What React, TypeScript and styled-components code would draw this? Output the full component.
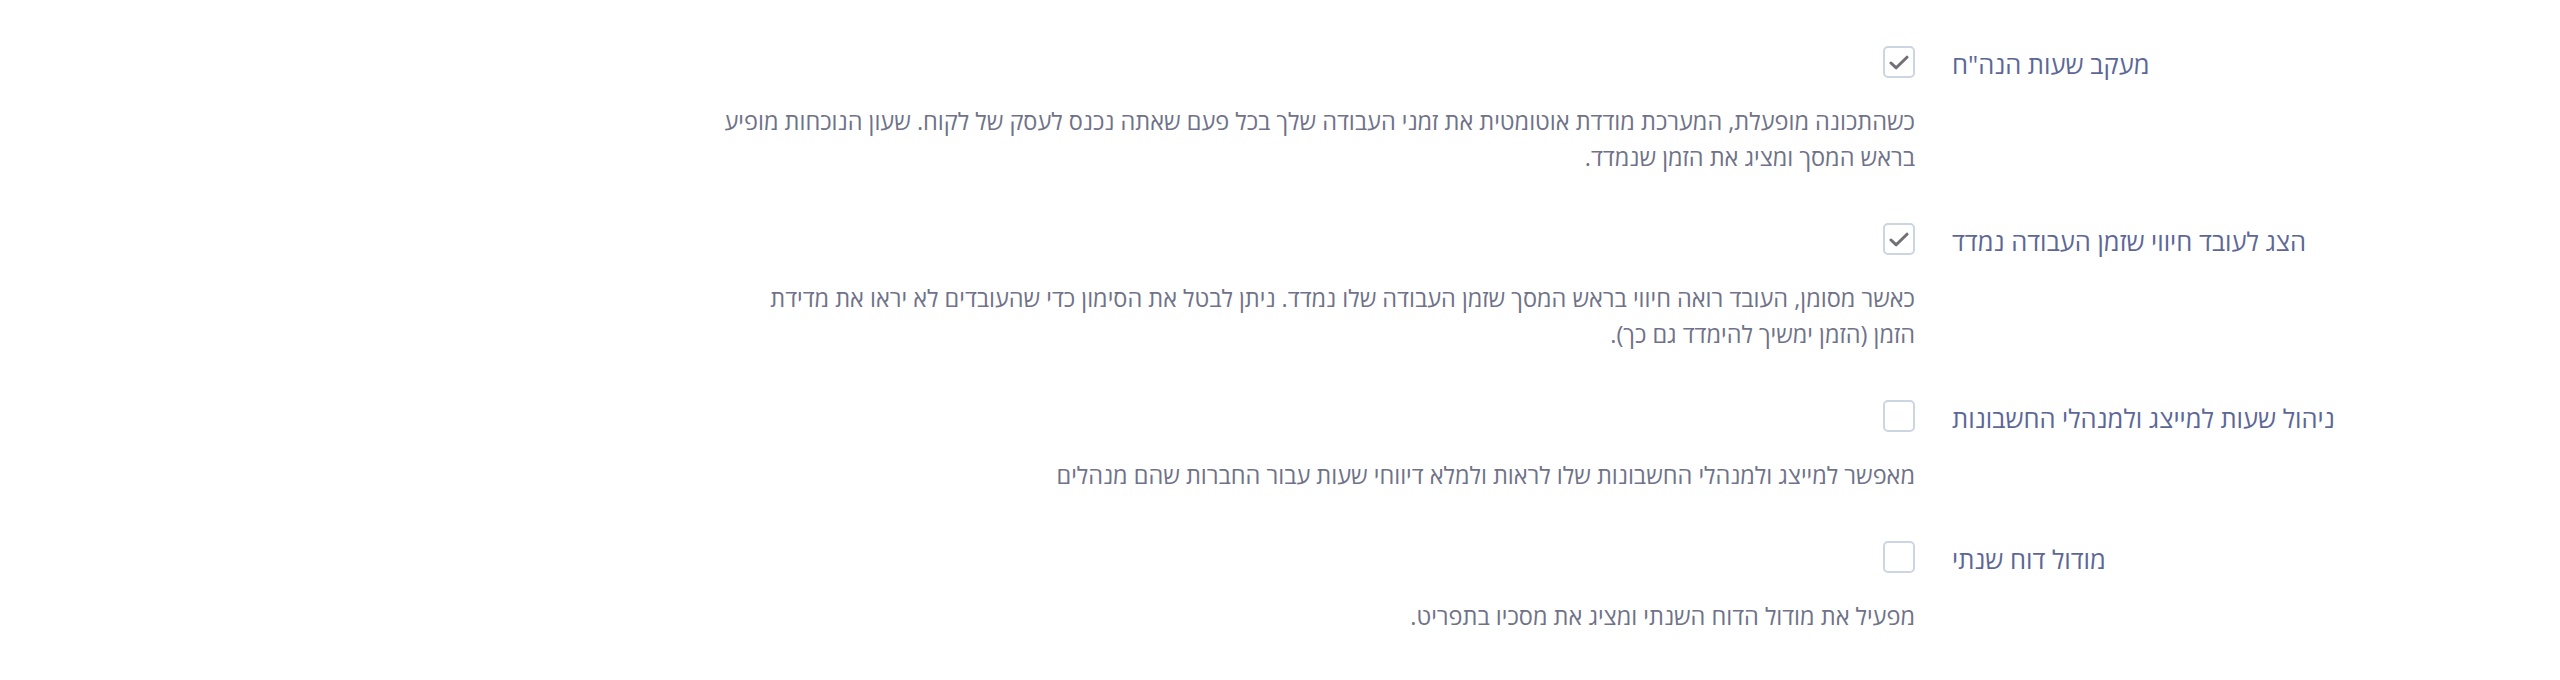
import React from 'react';
import styled, { createGlobalStyle } from 'styled-components';

const GlobalStyle = createGlobalStyle`
  body {
    margin: 0;
    background: #fff;
    font-family: "Open Sans", "Liberation Sans", "DejaVu Sans", sans-serif;
  }
`;

const Page = styled.div`
  direction: rtl;
  padding: 46px 12px 0 0;
  width: 2560px;
  box-sizing: border-box;
  overflow: hidden;
  height: 680px;
`;

const SettingRow = styled.div`
  display: grid;
  grid-template-columns: 596px 1191px;
  column-gap: 37px;
  margin-bottom: 48px;
`;

const Label = styled.div`
  text-align: left;
  font-size: 25.5px;
  line-height: 32px;
  color: #5d6796;
  padding-top: 2px;
`;

const Control = styled.div`
  display: flex;
  flex-direction: column;
  align-items: flex-start;
`;

const Box = styled.span<{ $checked: boolean }>`
  width: 32px;
  height: 32px;
  box-sizing: border-box;
  border: 2px solid #cdd4e2;
  border-radius: 5px;
  display: flex;
  align-items: center;
  justify-content: center;
  background: #fff;
  color: #707075;
`;

const Description = styled.p`
  margin: 25px 0 0;
  font-size: 23.5px;
  line-height: 36px;
  color: #6f7288;
`;

const SectionTitle = styled.h2`
  margin: 0;
  font-size: 30px;
  font-weight: 600;
  line-height: 40px;
  color: #5d6796;
`;

const settings = [
  {
    label: 'מעקב שעות הנה"ח',
    checked: true,
    text: 'כשהתכונה מופעלת, המערכת מודדת אוטומטית את זמני העבודה שלך בכל פעם שאתה נכנס לעסק של לקוח. שעון הנוכחות מופיע בראש המסך ומציג את הזמן שנמדד.',
  },
  {
    label: 'הצג לעובד חיווי שזמן העבודה נמדד',
    checked: true,
    text: 'כאשר מסומן, העובד רואה חיווי בראש המסך שזמן העבודה שלו נמדד. ניתן לבטל את הסימון כדי שהעובדים לא יראו את מדידת הזמן (הזמן ימשיך להימדד גם כך).',
  },
  {
    label: 'ניהול שעות למייצג ולמנהלי החשבונות',
    checked: false,
    text: 'מאפשר למייצג ולמנהלי החשבונות שלו לראות ולמלא דיווחי שעות עבור החברות שהם מנהלים',
  },
  {
    label: 'מודול דוח שנתי',
    checked: false,
    text: 'מפעיל את מודול הדוח השנתי ומציג את מסכיו בתפריט.',
  },
];

function Checkbox({ checked }: { checked: boolean }) {
  return (
    <Box $checked={checked}>
      {checked && (
        <svg width="20" height="15" viewBox="0 0 20 15" fill="none">
          <path d="M2 8 L7.2 12.8 L18 2.2" stroke="currentColor" strokeWidth="3" strokeLinecap="round" strokeLinejoin="round" />
        </svg>
      )}
    </Box>
  );
}

export default function App() {
  return (
    <>
      <GlobalStyle />
      <Page>
        {settings.map((s) => (
          <SettingRow key={s.label}>
            <Label>{s.label}</Label>
            <Control>
              <Checkbox checked={s.checked} />
              <Description>{s.text}</Description>
            </Control>
          </SettingRow>
        ))}
        <SectionTitle>לעדכון</SectionTitle>
      </Page>
    </>
  );
}
